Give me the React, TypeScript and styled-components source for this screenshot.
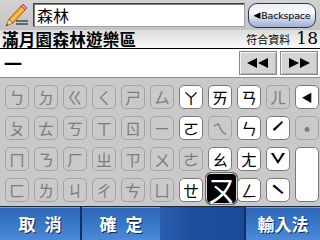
import React from 'react';
import styled, { createGlobalStyle, css } from 'styled-components';

type KeyState = 'off' | 'on' | 'selected';

interface KeyDef {
  label: string;
  state: KeyState;
  tall?: boolean;
  size?: number;
  dy?: number;
}

const k = (label: string, state: KeyState = 'off', size?: number, dy?: number, tall = false): KeyDef => ({
  label,
  state,
  size,
  dy,
  tall,
});

const keys: KeyDef[] = [
  k('ㄅ'), k('ㄉ'), k('ㄍ'), k('ㄑ'), k('ㄕ'), k('ㄙ'), k('ㄚ', 'on'), k('ㄞ', 'on'), k('ㄢ', 'on'), k('ㄦ'), k('◀', 'on', 11),
  k('ㄆ'), k('ㄊ'), k('ㄎ'), k('ㄒ'), k('ㄖ'), k('ㄧ'), k('ㄛ', 'on'), k('ㄟ'), k('ㄣ', 'on'), k('ˊ', 'on', 28, 6), k('˙', 'off', 26, 1),
  k('ㄇ'), k('ㄋ'), k('ㄏ'), k('ㄓ'), k('ㄗ'), k('ㄨ'), k('ㄜ'), k('ㄠ', 'on'), k('ㄤ', 'on'), k('ˇ', 'on', 28, 6), k('', 'on', undefined, undefined, true),
  k('ㄈ'), k('ㄌ'), k('ㄐ'), k('ㄔ'), k('ㄘ'), k('ㄩ'), k('ㄝ', 'on'), k('ㄡ', 'selected', 29), k('ㄥ', 'on'), k('ˋ', 'on', 28, 6),
];

const GlobalStyle = createGlobalStyle`
  html, body {
    margin: 0;
    padding: 0;
  }
  body {
    width: 320px;
    height: 240px;
    overflow: hidden;
    background: #c8c8c8;
    font-family: "Noto Sans CJK TC", "Noto Sans", sans-serif;
  }
`;

const Screen = styled.div`
  width: 320px;
  height: 240px;
  display: flex;
  flex-direction: column;
  overflow: hidden;
`;

const TopBar = styled.div`
  height: 30px;
  display: flex;
  align-items: center;
  background: linear-gradient(#d2d2d2, #c4c4c4);
`;

const PencilBox = styled.div`
  width: 33px;
  height: 30px;
  display: flex;
  align-items: center;
  justify-content: center;
`;

const InputBox = styled.div`
  width: 212px;
  height: 24px;
  box-sizing: border-box;
  border: 1px solid #404040;
  border-right-color: #a0a0a0;
  border-bottom-color: #a0a0a0;
  box-shadow: inset 1px 1px 0 #808080;
  background: #fff;
  display: flex;
  align-items: center;
  padding-left: 3px;
  font-size: 16px;
  color: #000;
`;

const BackspaceButton = styled.div`
  margin-left: 3px;
  width: 68px;
  height: 25px;
  box-sizing: border-box;
  border: 1px solid #303848;
  border-radius: 9px;
  background: linear-gradient(#e8eef8 0%, #f8faff 35%, #c4d0e6 70%, #9eb0d2 100%);
  display: flex;
  align-items: center;
  justify-content: center;
  font-family: "DejaVu Sans", sans-serif;
  font-size: 9.5px;
  color: #000;
  letter-spacing: -0.2px;
`;

const Arrow = styled.span`
  font-size: 9px;
  margin-right: 1px;
`;

const TitleRow = styled.div`
  height: 18px;
  display: flex;
  align-items: flex-end;
  justify-content: space-between;
  padding: 0 2px;
  background: linear-gradient(#dcdcdc, #fafafa);
  border-bottom: 1px solid #000;
`;

const Title = styled.div`
  font-size: 16.5px;
  font-weight: 700;
  line-height: 18px;
  color: #000;
  letter-spacing: 0.3px;
`;

const MatchInfo = styled.div`
  display: flex;
  align-items: baseline;
  gap: 6px;
  line-height: 18px;
`;

const MatchLabel = styled.span`
  font-size: 11px;
`;

const MatchCount = styled.span`
  font-family: "DejaVu Serif", serif;
  font-size: 17px;
`;

const CandidateRow = styled.div`
  height: 28px;
  display: flex;
  align-items: center;
  justify-content: space-between;
  background: #fff;
  border-bottom: 1px solid #909090;
`;

const Candidate = styled.div`
  padding-left: 4px;
  font-size: 18px;
  font-weight: 700;
  line-height: 18px;
`;

const NavGroup = styled.div`
  display: flex;
  gap: 3px;
  padding-right: 2px;
`;

const NavButton = styled.div`
  width: 38px;
  height: 24px;
  box-sizing: border-box;
  border: 1px solid #8a8a8a;
  box-shadow: inset 1px 1px 0 #f4f4f4, inset -1px -1px 0 #b0b0b0;
  background: #d4d4d4;
  display: flex;
  align-items: center;
  justify-content: center;
`;

const KeyPad = styled.div`
  height: 128px;
  box-sizing: border-box;
  padding: 7px 0 0 5px;
  display: grid;
  grid-template-columns: repeat(11, 24px);
  grid-auto-rows: 24px;
  column-gap: 5px;
  row-gap: 7px;
  background: #c9c9c9;
`;

const Key = styled.div<{ $state: KeyState; $tall?: boolean }>`
  box-sizing: border-box;
  border-radius: 5px;
  display: flex;
  align-items: center;
  justify-content: center;
  overflow: hidden;
  ${(p) => p.$tall && css`grid-row: span 2;`}
  ${(p) =>
    p.$state === 'off' &&
    css`
      border: 1px solid #a4a4a4;
      color: #7c7c7c;
      background: #cacaca;
    `}
  ${(p) =>
    p.$state === 'on' &&
    css`
      border: 1px solid #7a7a7a;
      color: #000;
      background: #fff;
    `}
  ${(p) =>
    p.$state === 'selected' &&
    css`
      margin: -6px -6px -3px -3px;
      border: 1px solid #6a6a6a;
      box-shadow: inset 0 0 0 1px #d8d8d8;
      border-radius: 6px;
      color: #fff;
      background: #000;
      z-index: 1;
    `}
`;

const KeyLabel = styled.span<{ $size?: number; $dy?: number }>`
  display: block;
  font-size: ${(p) => p.$size ?? 16}px;
  line-height: ${(p) => (p.$dy ? 10 : 18)}px;
  height: ${(p) => (p.$dy ? 10 : 18)}px;
  transform: translateY(${(p) => p.$dy ?? 0}px);
`;

const BottomBar = styled.div`
  height: 34px;
  display: flex;
  border-top: 1px solid #202838;
  box-sizing: border-box;
  background: linear-gradient(#1c4f9e, #1f55a8);
`;

const BarButton = styled.div<{ $width: number }>`
  width: ${(p) => p.$width}px;
  display: flex;
  align-items: center;
  justify-content: center;
  background: linear-gradient(#2e66b6 0%, #3a78c8 55%, #4e8ada 100%);
  box-shadow: inset 0 1px 0 #6ea2e6;
  color: #fff;
  font-size: 17px;
  font-weight: 700;
  text-shadow: 1px 1px 0 #0c2a5c;
`;

const Spaced = styled.span`
  letter-spacing: 9px;
  margin-right: -9px;
`;

const BarGap = styled.div`
  width: 2px;
  background: #14305e;
`;

const BarBlank = styled.div`
  flex: 1;
  background: linear-gradient(90deg, #2a5fae 0%, #1d4e9e 40%, #1a4a98 100%);
`;

const Pencil = () => (
  <svg width="26" height="24" viewBox="0 0 26 24">
    <line x1="12" y1="18" x2="24" y2="18" stroke="#333" strokeWidth="1.3" />
    <line x1="12" y1="21" x2="24" y2="21" stroke="#333" strokeWidth="1.3" />
    <polygon points="5,16 17,3 21,7 9,20" fill="#f5a020" stroke="#a05000" strokeWidth="0.8" />
    <polygon points="7,17 19,4.5 20,5.5 8,18.5" fill="#ffd070" />
    <polygon points="17,3 19,1 23,5 21,7" fill="#f080a0" stroke="#a04060" strokeWidth="0.8" />
    <polygon points="5,16 9,20 2,23" fill="#f0d0a0" stroke="#a05000" strokeWidth="0.8" />
    <polygon points="3,21 4,22 2,23" fill="#222" />
  </svg>
);

const DoubleArrow = ({ dir }: { dir: 'left' | 'right' }) => (
  <svg width="22" height="10" viewBox="0 0 22 10">
    {dir === 'left' ? (
      <>
        <polygon points="0,5 10,0 10,10" fill="#000" />
        <polygon points="11,5 21,0 21,10" fill="#000" />
      </>
    ) : (
      <>
        <polygon points="1,0 11,5 1,10" fill="#000" />
        <polygon points="12,0 22,5 12,10" fill="#000" />
      </>
    )}
  </svg>
);

const App = () => {
  return (
    <Screen>
      <GlobalStyle />
      <TopBar>
        <PencilBox>
          <Pencil />
        </PencilBox>
        <InputBox>森林</InputBox>
        <BackspaceButton>
          <Arrow>◀</Arrow>Backspace
        </BackspaceButton>
      </TopBar>
      <TitleRow>
        <Title>滿月園森林遊樂區</Title>
        <MatchInfo>
          <MatchLabel>符合資料</MatchLabel>
          <MatchCount>18</MatchCount>
        </MatchInfo>
      </TitleRow>
      <CandidateRow>
        <Candidate>一</Candidate>
        <NavGroup>
          <NavButton>
            <DoubleArrow dir="left" />
          </NavButton>
          <NavButton>
            <DoubleArrow dir="right" />
          </NavButton>
        </NavGroup>
      </CandidateRow>
      <KeyPad>
        {keys.map((key, i) => (
          <Key key={i} $state={key.state} $tall={key.tall}>
            {key.label && (
              <KeyLabel $size={key.size} $dy={key.dy}>
                {key.label}
              </KeyLabel>
            )}
          </Key>
        ))}
      </KeyPad>
      <BottomBar>
        <BarButton $width={80}>
          <Spaced>取消</Spaced>
        </BarButton>
        <BarGap />
        <BarButton $width={78}>
          <Spaced>確定</Spaced>
        </BarButton>
        <BarBlank />
        <BarGap />
        <BarButton $width={74}>輸入法</BarButton>
      </BottomBar>
    </Screen>
  );
};

export default App;
